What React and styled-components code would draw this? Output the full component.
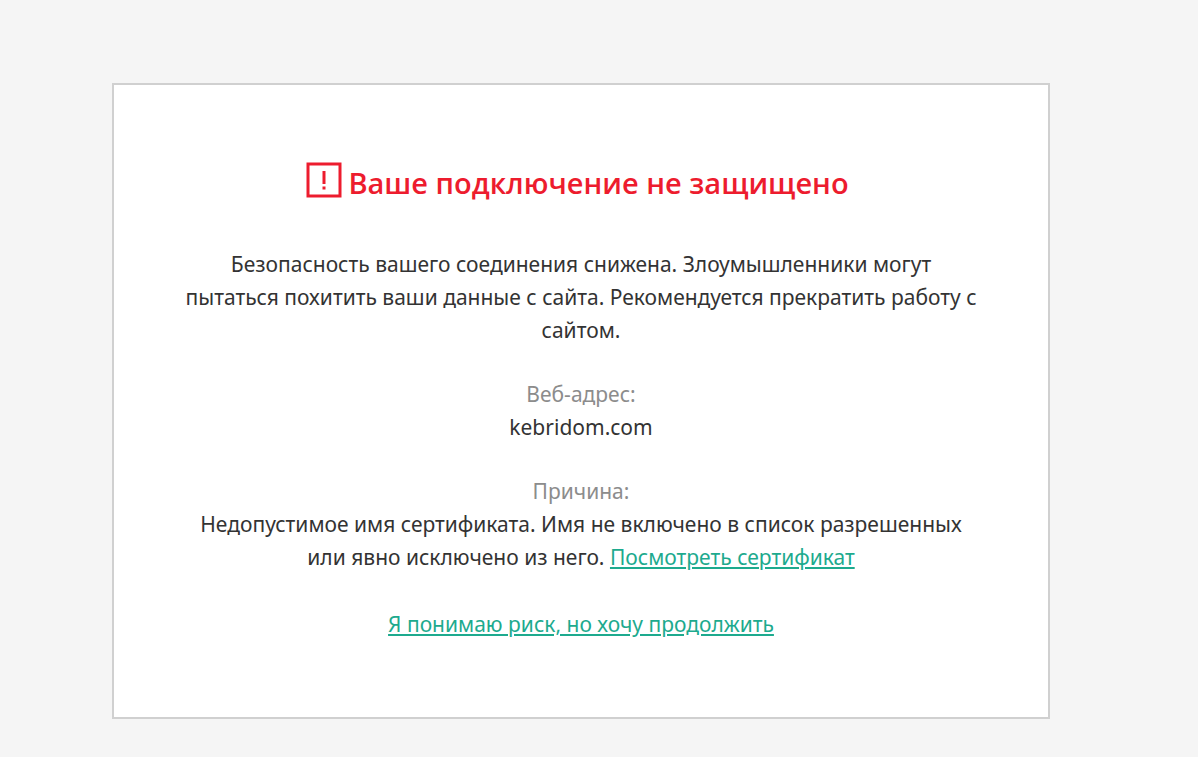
import React from 'react';
import styled, {createGlobalStyle} from 'styled-components';

const App = () => {
  return(
    <Page>
      <GlobalStyle/>
      <Card>
        <Title>
          <WarningIcon/>
          Ваше подключение не защищено
        </Title>
        <Text>
          Безопасность вашего соединения снижена. Злоумышленники могут пытаться похитить ваши данные с сайта. Рекомендуется прекратить работу с сайтом.
        </Text>
        <Details>
          <Label>Веб-адрес:</Label>
          <Value>kebridom.com</Value>
        </Details>
        <Details>
          <Label>Причина:</Label>
          <Value>
            Недопустимое имя сертификата. Имя не включено в список разрешенных или явно исключено из него. <Link href="#certificate">Посмотреть сертификат</Link>
          </Value>
        </Details>
        <Footer>
          <Link href="#continue">Я понимаю риск, но хочу продолжить</Link>
        </Footer>
      </Card>
    </Page>
  )
}

const WarningIcon = () => (
  <Icon viewBox="0 0 36 36" aria-hidden="true">
    <rect x="2" y="2" width="32" height="32" fill="none" stroke="#ed1c2e" strokeWidth="3"/>
    <path d="M16.5 9h3v13h-3zM16.5 24.500h3v3h-3z" fill="#ed1c2e"/>
  </Icon>
)

const GlobalStyle = createGlobalStyle`
    body {
      margin: 0;
      background: #f5f5f5;
      font-family: "Noto Sans", "Open Sans", sans-serif;
    }
`
const Page = styled.main`
    box-sizing: border-box;
    min-height: 100vh;
    padding: 83px 148px 38px 112px;
`
const Card = styled.section`
    box-sizing: border-box;
    max-width: 938px;
    margin: 0 auto;
    padding: 77px 70px 76px;
    border: 2px solid #d0d0d0;
    background: #ffffff;
    color: #333333;
    text-align: center;
    font-size: 21px;
    line-height: 33px;
`
const Title = styled.h1`
    display: flex;
    justify-content: center;
    gap: 6px;
    margin: 0 0 44px;
    padding-right: 7px;
    color: #ed1c2e;
    font-family: "Open Sans", "Noto Sans", sans-serif;
    font-size: 29px;
    font-weight: 600;
    line-height: 42px;
`
const Icon = styled.svg`
    flex: none;
    width: 36px;
    height: 36px;
`
const Text = styled.p`
    margin: 0 0 31px;
`
const Details = styled.dl`
    margin: 0 0 31px;
`
const Label = styled.dt`
    color: #8c8c8c;
`
const Value = styled.dd`
    margin: 0;
`
const Footer = styled.p`
    margin: 34px 0 0;
`
const Link = styled.a`
    color: #1daa8e;
    text-decoration: underline;
    &:hover{
      color: #00856d;
    }
`

export default App;
